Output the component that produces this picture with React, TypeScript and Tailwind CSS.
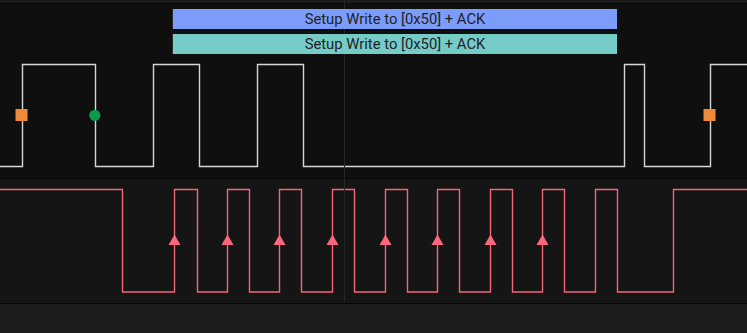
import React from "react";

const clockEdges = [0, 22.5, 95.5, 153.5, 199.5, 257.5, 303.5, 624.5, 644.5, 710.5, 747];
const dataEdges = [0, 122.5, 174.5, 197.5, 227.5, 249.5, 279.5, 301.5, 332.5, 354.5, 385.5, 407.5, 437.5, 459.5, 490.5, 512.5, 542.5, 564.5, 595.5, 617.5, 673.5, 747];
const arrows = [174.5, 227.5, 279.5, 332.5, 385.5, 437.5, 490.5, 542.5];

// builds a square wave path; startHigh tells the level of the first segment
function wavePath(edges: number[], hi: number, lo: number, startHigh: boolean) {
  let high = startHigh;
  let d = `M ${edges[0]} ${high ? hi : lo}`;
  for (let i = 1; i < edges.length; i++) {
    const x = edges[i];
    d += ` L ${x} ${high ? hi : lo}`;
    if (i < edges.length - 1) {
      high = !high;
      d += ` L ${x} ${high ? hi : lo}`;
    }
  }
  return d;
}

const Annotation: React.FC<{ color: string; label: string }> = ({ color, label }) => (
  <div
    className={`h-[20px] flex items-center justify-center text-[14.8px] leading-none text-[#1f2329] shadow-[-1px_0_0_#2a2a2a] ${color}`}
    style={{ fontFamily: "Roboto, 'Liberation Sans', sans-serif" }}
  >
    {label}
  </div>
);

export default function App() {
  return (
    <div className="relative w-[747px] h-[333px] bg-[#1c1c1c] flex flex-col overflow-hidden">
      <div className="h-[3px] bg-[#1b1b1b]" />
      <div className="h-px bg-[#090909]" />

      {/* clock channel */}
      <div className="relative h-[174px] bg-[#0f0f0f]">
        <svg className="absolute inset-0" width={747} height={174}>
          <path
            d={wavePath(clockEdges, 60.5, 162.5, false)}
            fill="none"
            stroke="#d6d6d6"
            strokeWidth={1.4}
          />
          <rect x={15.5} y={105} width={12} height={12} fill="#ee8a3a" />
          <rect x={703.5} y={105} width={12} height={12} fill="#ee8a3a" />
          <circle cx={94.8} cy={111.3} r={5.6} fill="#0b9a4c" />
        </svg>
        <div className="absolute z-10 left-[173px] w-[444px] top-[5px] flex flex-col gap-[5px]">
          <Annotation color="bg-[#7b9cf8]" label="Setup Write to [0x50] + ACK" />
          <Annotation color="bg-[#75cbc6]" label="Setup Write to [0x50] + ACK" />
        </div>
      </div>
      <div className="h-px bg-[#050505]" />

      {/* data channel */}
      <div className="relative h-[124px] bg-[#151515]">
        <svg className="absolute inset-0" width={747} height={124}>
          <path
            d={wavePath(dataEdges, 10.5, 113, true)}
            fill="none"
            stroke="#f4667a"
            strokeWidth={1.4}
          />
          {arrows.map((x) => (
            <polygon key={x} points={`${x - 6},66 ${x + 6},66 ${x},55.5`} fill="#fc677c" />
          ))}
        </svg>
      </div>
      <div className="h-px bg-[#050505]" />
      <div className="flex-1 bg-[#1c1c1c]" />

      {/* time cursor */}
      <div className="absolute left-[344px] top-0 h-[302px] w-px bg-[#262626]" />
    </div>
  );
}
